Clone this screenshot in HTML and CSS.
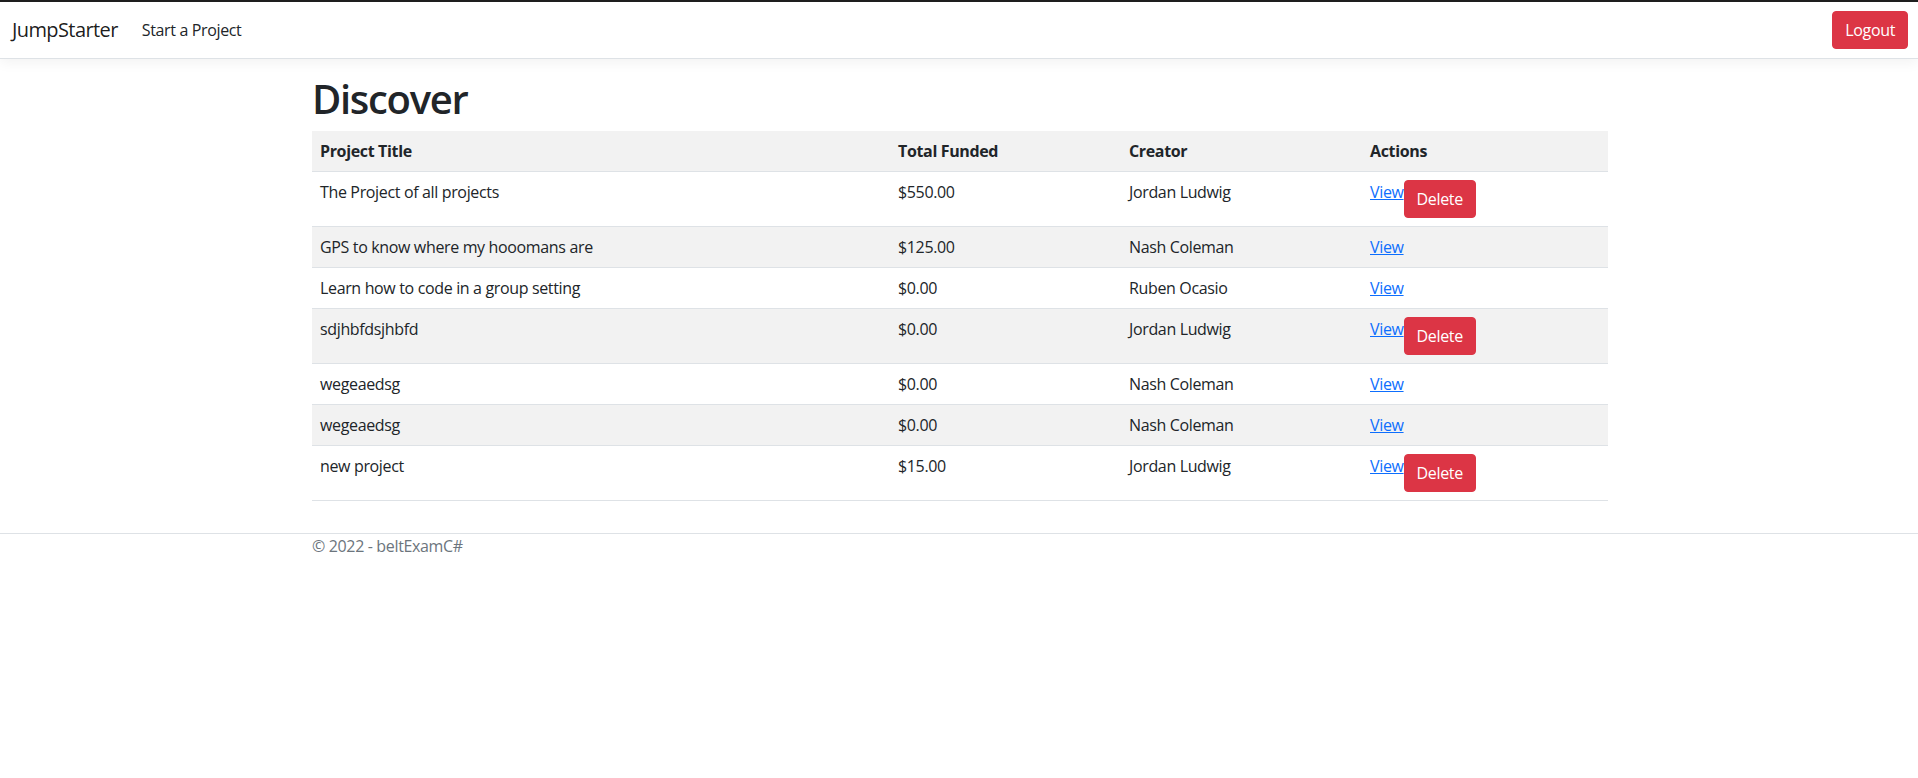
FILE: index.html
```html
<!DOCTYPE html>
<html lang="en">
<head>
<meta charset="utf-8">
<title>Discover - JumpStarter</title>
<link rel="stylesheet" href="styles.css">
</head>
<body>
<div class="topline"></div>
<header>
  <nav class="navbar">
    <div class="nav-inner">
      <a class="brand" href="#">JumpStarter</a>
      <ul class="nav-links">
        <li><a class="nav-link" href="#">Start a Project</a></li>
      </ul>
      <div class="nav-spacer"></div>
      <a class="btn btn-danger" href="#">Logout</a>
    </div>
  </nav>
</header>
<div class="container">
  <main class="main">
    <h1 class="title">Discover</h1>
    <table class="table">
      <colgroup>
        <col class="c-title">
        <col class="c-funded">
        <col class="c-creator">
        <col class="c-actions">
      </colgroup>
      <thead>
        <tr class="striped">
          <th>Project Title</th>
          <th>Total Funded</th>
          <th>Creator</th>
          <th>Actions</th>
        </tr>
      </thead>
      <tbody>
        <tr>
          <td>The Project of all projects</td>
          <td>$550.00</td>
          <td>Jordan Ludwig</td>
          <td><div class="actions"><a class="link" href="#">View</a><button class="btn btn-danger" type="button">Delete</button></div></td>
        </tr>
        <tr class="striped">
          <td>GPS to know where my hooomans are</td>
          <td>$125.00</td>
          <td>Nash Coleman</td>
          <td><div class="actions"><a class="link" href="#">View</a></div></td>
        </tr>
        <tr>
          <td>Learn how to code in a group setting</td>
          <td>$0.00</td>
          <td>Ruben Ocasio</td>
          <td><div class="actions"><a class="link" href="#">View</a></div></td>
        </tr>
        <tr class="striped">
          <td>sdjhbfdsjhbfd</td>
          <td>$0.00</td>
          <td>Jordan Ludwig</td>
          <td><div class="actions"><a class="link" href="#">View</a><button class="btn btn-danger" type="button">Delete</button></div></td>
        </tr>
        <tr>
          <td>wegeaedsg</td>
          <td>$0.00</td>
          <td>Nash Coleman</td>
          <td><div class="actions"><a class="link" href="#">View</a></div></td>
        </tr>
        <tr class="striped">
          <td>wegeaedsg</td>
          <td>$0.00</td>
          <td>Nash Coleman</td>
          <td><div class="actions"><a class="link" href="#">View</a></div></td>
        </tr>
        <tr>
          <td>new project</td>
          <td>$15.00</td>
          <td>Jordan Ludwig</td>
          <td><div class="actions"><a class="link" href="#">View</a><button class="btn btn-danger" type="button">Delete</button></div></td>
        </tr>
      </tbody>
    </table>
  </main>
</div>
<footer class="footer">
  <div class="container">&copy; 2022 - beltExamC#</div>
</footer>
</body>
</html>
```
FILE: styles.css
```css
* {
  box-sizing: border-box;
}

html, body {
  margin: 0;
  padding: 0;
}

body {
  font-family: "Open Sans", "Noto Sans", sans-serif;
  font-size: 16px;
  line-height: 1.5;
  color: #212529;
  background: #fff;
  letter-spacing: -0.35px;
}

.topline {
  height: 2px;
  background: #1f1f1f;
}

.navbar {
  background: #fff;
  border-bottom: 1px solid #dee2e6;
  box-shadow: 0 0.25rem 0.75rem rgba(0, 0, 0, 0.05);
  padding: 8px 0;
  margin-bottom: 16px;
}

.nav-inner {
  display: flex;
  align-items: center;
  padding: 0 10px 0 12px;
}

.brand {
  font-size: 20px;
  line-height: 30px;
  padding: 5px 0;
  margin-right: 16px;
  color: rgba(0, 0, 0, 0.9);
  text-decoration: none;
  letter-spacing: -0.6px;
}

.nav-links {
  list-style: none;
  margin: 0;
  padding: 0;
  display: flex;
}

.nav-link {
  display: block;
  padding: 8px;
  color: #212529;
  text-decoration: none;
}

.nav-spacer {
  flex: 1;
}

.btn {
  display: inline-block;
  font-family: inherit;
  font-size: 16px;
  line-height: 24px;
  padding: 6px 12px;
  border: 1px solid transparent;
  border-radius: 4px;
  text-decoration: none;
  cursor: pointer;
  letter-spacing: inherit;
}

.btn-danger {
  color: #fff;
  background: #dc3545;
  border-color: #dc3545;
}

.container {
  max-width: 1320px;
  margin: 0 auto;
  padding: 0 11px 0 13px;
}

.main {
  padding-bottom: 16px;
}

.title {
  font-size: 40px;
  font-weight: 600;
  line-height: 1.2;
  margin: 0 0 8px;
  letter-spacing: -1.3px;
}

.table {
  width: 100%;
  border-collapse: collapse;
  table-layout: fixed;
  margin-bottom: 16px;
}

.c-title { width: 578px; }
.c-funded { width: 231px; }
.c-creator { width: 241px; }
.c-actions { width: 246px; }

.table th,
.table td {
  padding: 8px;
  text-align: left;
  vertical-align: top;
  border-bottom: 1px solid #dee2e6;
}

.table th {
  font-weight: 700;
}

.table .striped {
  background: #f2f2f2;
}

.actions {
  display: flex;
  align-items: flex-start;
}

.link {
  color: #0d6efd;
  text-decoration: underline;
}

.footer {
  border-top: 1px solid #dee2e6;
  color: #6c757d;
}
```
